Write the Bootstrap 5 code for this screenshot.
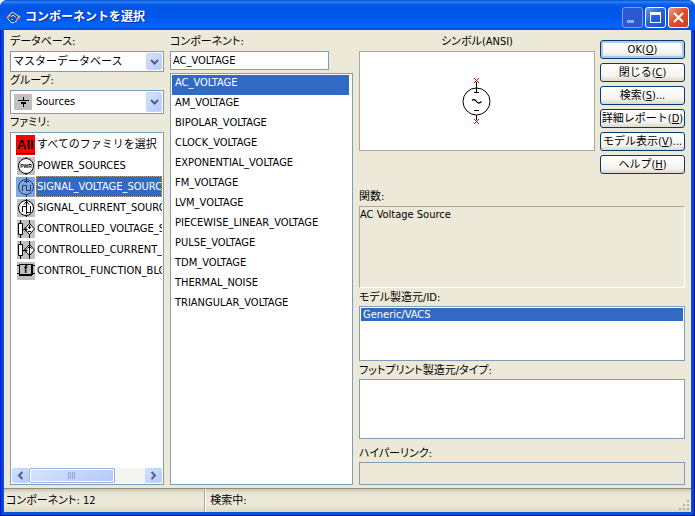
<!DOCTYPE html>
<html lang="ja">
<head>
<meta charset="utf-8">
<meta name="viewport" content="width=device-width, initial-scale=1">
<title>コンポーネントを選択</title>
<link href="https://cdn.jsdelivr.net/npm/bootstrap@5.3.0/dist/css/bootstrap.min.css" rel="stylesheet">
<style>
:root{--face:#ece9d8;--line:#7f9db9;--pick:#316ac5}
body{font-family:"DejaVu Sans Condensed","Noto Sans CJK JP",sans-serif;font-size:11px;line-height:16px;color:#000;background:#fff;font-feature-settings:"palt"}
.win{min-height:100vh;padding-bottom:3px;background:linear-gradient(90deg,#0019cf 0 1px,#0540e0 1px 3px,#0855dd 3px calc(100% - 3px),#0540e0 calc(100% - 3px) calc(100% - 1px),#00138c calc(100% - 1px));border-radius:7px 7px 0 0;border-bottom:1px solid #00138c}
.caption-bar{height:30px;padding:4px 6px 0 6px;border-radius:7px 7px 0 0;color:#fff;background:linear-gradient(#0453c8 0,#2a83ff 2px,#0b5fe8 4px,#0054e3 8px,#0058ee 18px,#0066ff 26px,#0050d8 30px)}
.caption-bar h1{font-size:12px;line-height:16px;font-weight:700;font-feature-settings:normal;text-shadow:1px 1px #0a2a8c}
.cap-btns{gap:2px}
.cap-btn{width:21px;height:21px;padding:0;display:flex;border:1px solid #fff;border-radius:3px;background:linear-gradient(135deg,#6f9af4,#2a5fe0 45%,#1a4fd0)}
.cap-btn:disabled{border-color:#7f9be6;background:#2a58d0}
.cap-btn.quit{background:linear-gradient(135deg,#f0a088,#e0502a 45%,#c8401a)}
.pane{background:var(--face);margin:0 4px;padding:3px 6px}
.cols{display:grid;grid-template-columns:154fr 183fr 326fr;column-gap:6px}
.cols>section{min-width:0}
.lab{display:block;line-height:16px;padding:1px 0;white-space:nowrap}
.lab.low{padding:2px 0 0}
.gap-top{margin-top:14px}
.gap-mid{margin-top:5px}
.well{background:#fff;border:1px solid var(--line);min-width:0;overflow:hidden}
.field{width:100%;font-size:inherit;line-height:16px;border:1px solid var(--line);border-radius:0;padding:0 2px;color:#000;background:#fff;resize:none;outline:0}
.entry{height:19px}
.link-entry{height:23px;background:var(--face)}
.combo{display:grid;grid-template-columns:minmax(0,1fr) 19px}
.combo select{grid-area:1/1/2/3;appearance:none;height:21px}
.combo.tall select{height:24px;padding-left:25px}
.combo .drop{grid-area:1/2;margin:2px 2px 2px 1px;pointer-events:none}
.combo .pic{grid-area:1/1;align-self:center;margin-left:4px;pointer-events:none}
.drop,.arrow,.thumb{display:flex;align-items:center;justify-content:center;border:1px solid #c3d3fd;border-radius:2px;background:linear-gradient(135deg,#d6e2fe,#b6caf7);padding:0}
.item{border:0;border-radius:0;background:none;color:#000;text-align:left;white-space:nowrap;display:flex;padding:0;font-size:inherit}
.fam{padding:1px 1px 0 0}
.fam .item{height:21px;padding-left:5px;align-items:center;gap:1px}
.fam .item svg{flex:none}
.fam .item span{flex:1 1 0;min-width:0;overflow:hidden;line-height:21px;padding-left:1px}
.fam .item.on span{background:var(--pick);color:#fff;outline:1px dotted #e0a030;outline-offset:-1px}
.comp{margin-top:3px;padding:1px 3px 1px 1px}
.comp .item{height:20px;line-height:15px;padding-left:3px}
.comp .item.on,.model .item.on{background:var(--pick);color:#fff}
.model{padding:1px}
.model .item{height:13px;line-height:13px;padding-left:2px}
.scroller{height:15px;margin:0 0 1px 1px;background:#f5f5f0}
.arrow{width:17px;height:15px}
.thumb{height:15px;flex:0 0 57%;border-color:#98b0e8;box-shadow:inset 0 0 0 1px #fff}
.push{height:19px;padding:0;font-size:11px;line-height:16px;white-space:nowrap;color:#000;border:1px solid #003c74;border-radius:3px;background:linear-gradient(#fff,#f5f4ee 70%,#dcd8cc)}
.push.main{box-shadow:inset 0 0 0 2px #b0c8f0}
.top-row{gap:5px}
.symbol{flex:236 1 0;min-width:0}
.pushes{flex:85 1 0;gap:4px;padding-top:7px}
.stage{height:100px;background:#fff;border:1px solid #aca899}
.note{background:var(--face);border-color:#aca899 #fff #fff #aca899;padding:0}
.f81{flex:82 0 82px}.f55{flex:55 0 55px}.f60{flex:60 0 60px}
.foot{height:24px;margin:0 4px;border-top:1px solid #8f8c7e;background:linear-gradient(#c8c5b4,#e8e5d6 4px,#ece9d8 16px,#dcd8c0);line-height:23px}
.foot .count{flex:0 0 29.3%;padding-left:2px;border-right:1px solid #aca899}
.foot .find{border-left:1px solid #fff;padding-left:4px}
</style>
</head>
<body>
<div class="win d-flex flex-column">
<header class="caption-bar d-flex align-items-center">
  <svg width="15" height="13" viewBox="0 0 15 13" fill="none" aria-hidden="true"><path d="M0 7l3-4 2 1-3 4zM10 8l3-4 2 2-4 4z" fill="#d0905a"/><path d="M3 5l3-4 5 3 2 2M2 8l4 4 5-2M5 6l2-2 4 3M5 8l3 1 3-3" stroke="#e4edf8"/><path d="M4 6l3-3 4 3-3 3zM5 9l4 2" stroke="#273d62"/></svg>
  <h1 class="m-0 ms-1 me-auto">コンポーネントを選択</h1>
  <div class="d-flex cap-btns">
    <button class="cap-btn" disabled aria-label="最小化"><svg width="19" height="19"><path d="M4 12h7v3H4z" fill="#8fa9ea"/></svg></button>
    <button class="cap-btn" aria-label="最大化"><svg width="19" height="19"><path d="M4 4h11v11H4zM5 7v7h9V7z" fill="#fff" fill-rule="evenodd"/></svg></button>
    <button class="cap-btn quit" aria-label="閉じる"><svg width="19" height="19"><path d="M5 5l9 9M14 5l-9 9" stroke="#fff" stroke-width="2.200"/></svg></button>
  </div>
</header>
<main class="pane cols flex-grow-1">
  <section class="d-flex flex-column">
    <label class="lab" for="db">データベース:</label>
    <div class="combo"><select id="db" class="field"><option>マスターデータベース</option></select>
      <span class="drop"><svg width="9" height="6" fill="none" stroke="#4d6185" stroke-width="2"><path d="M1 1l3.500 3.500L8 1"/></svg></span></div>
    <label class="lab" for="grp">グループ:</label>
    <div class="combo tall"><select id="grp" class="field"><option>Sources</option></select>
      <svg class="pic" width="18" height="16" fill="none" stroke="#000"><path d="M0 0h18v16H0z" fill="#c0c0c0" stroke="none"/><path d="M9.500 3v4M9.500 9v4"/><path d="M4 6.500h11"/><path d="M7 9h5" stroke-width="2"/></svg>
      <span class="drop"><svg width="9" height="6" fill="none" stroke="#4d6185" stroke-width="2"><path d="M1 1l3.500 3.500L8 1"/></svg></span></div>
    <div class="lab" id="famlab">ファミリ:</div>
    <div class="well fam flex-grow-1 d-flex flex-column" role="listbox" aria-labelledby="famlab">
      <button class="item" role="option"><svg width="19" height="20"><path d="M0 0h19v20H0z" fill="red"/><path d="M0 18.500h19" stroke="#000"/><text x="1" y="14" font-size="13" font-weight="700" font-family="Liberation Sans,sans-serif">All</text></svg><span>すべてのファミリを選択</span></button>
      <button class="item" role="option"><svg width="19" height="18"><path d="M1 0h18v18H1z" fill="#c0c0c0"/><circle cx="10" cy="9" r="7.500" fill="#fff" stroke="#000"/><path d="M10 0v2M10 16v2" stroke="#000"/><text x="10" y="11" font-size="5" font-weight="700" text-anchor="middle" font-family="Liberation Sans,sans-serif">PWR</text></svg><span>POWER_SOURCES</span></button>
      <button class="item on" role="option" aria-selected="true"><svg width="19" height="20" fill="none" stroke="#123a78"><path d="M0 0h19v20H0z" fill="#85a8dc" stroke="none"/><circle cx="10" cy="10" r="7.500"/><path d="M10.500 0v6M8 4.500h5M6.500 14V8.500h4V13.500h4V8M10.500 18v2"/></svg><span>SIGNAL_VOLTAGE_SOURCES</span></button>
      <button class="item" role="option"><svg width="19" height="18" fill="none" stroke="#000"><path d="M1 0h18v18H1z" fill="#c0c0c0" stroke="none"/><circle cx="10" cy="9" r="7.500" fill="#fff"/><path d="M10.500 0v15M8 5.500l2.500-3 2.500 3M6.500 13V7.500h4V13.500h4V7M10.500 16v2"/></svg><span>SIGNAL_CURRENT_SOURCES</span></button>
      <button class="item" role="option"><svg width="19" height="18" fill="none" stroke="#000"><path d="M1 0h18v18H1z" fill="#c0c0c0" stroke="none"/><path d="M2.500 3.500h4v11h-4zM4.500 0v3M4.500 15v3M13.500 0v3M13.500 15v3" fill="#fff"/><path d="M13.500 3.500L18.500 9l-5 5.500L8.500 9z" fill="#fff"/><path d="M7 9.500h4M13.500 5v4M12 7.500h3M12 11.500h3M9 7.500l2 2-2 2"/></svg><span>CONTROLLED_VOLTAGE_SOURCES</span></button>
      <button class="item" role="option"><svg width="19" height="18" fill="none" stroke="#000"><path d="M1 0h18v18H1z" fill="#c0c0c0" stroke="none"/><path d="M2.500 3.500h4v11h-4zM4.500 0v3M4.500 15v3M13.500 0v3M13.500 15v3" fill="#fff"/><path d="M13.500 3.500L18.500 9l-5 5.500L8.500 9z" fill="#fff"/><path d="M7 9.500h4M13.500 4v11M11.500 7.500l2-2 2 2M9 7.500l2 2-2 2"/></svg><span>CONTROLLED_CURRENT_SOURCES</span></button>
      <button class="item" role="option"><svg width="19" height="18" fill="none" stroke="#000"><path d="M1 0h18v18H1z" fill="#c0c0c0" stroke="none"/><path d="M3.500 2.500h12v10h-12zM1 3.500h2M1 11.500h2M16 3.500h3M16 11.500h3"/><path d="M3 13h13M16 2v11" stroke-width="2"/><text x="8" y="11" font-size="10" font-weight="700" fill="#000" stroke="none" font-family="Liberation Sans,sans-serif">f</text></svg><span>CONTROL_FUNCTION_BLOCKS</span></button>
      <div class="scroller d-flex mt-auto">
        <button class="arrow" aria-label="左へ"><svg width="7" height="9" fill="none" stroke="#4d6185" stroke-width="2"><path d="M5.500 1L2 4.500 5.500 8"/></svg></button>
        <div class="thumb"><svg width="8" height="7" stroke="#8ca5e0"><path d="M.5 0v7M2.500 0v7M4.500 0v7M6.500 0v7"/></svg></div>
        <button class="arrow ms-auto" aria-label="右へ"><svg width="7" height="9" fill="none" stroke="#4d6185" stroke-width="2"><path d="M1.500 1L5 4.500 1.500 8"/></svg></button>
      </div>
    </div>
  </section>
  <section class="d-flex flex-column">
    <label class="lab" for="cmp">コンポーネント:</label>
    <div class="pe-4"><input id="cmp" class="field entry d-block" value="AC_VOLTAGE"></div>
    <div class="well comp flex-grow-1 d-flex flex-column" role="listbox" aria-label="コンポーネント">
      <button class="item on" role="option" aria-selected="true">AC_VOLTAGE</button>
      <button class="item" role="option">AM_VOLTAGE</button>
      <button class="item" role="option">BIPOLAR_VOLTAGE</button>
      <button class="item" role="option">CLOCK_VOLTAGE</button>
      <button class="item" role="option">EXPONENTIAL_VOLTAGE</button>
      <button class="item" role="option">FM_VOLTAGE</button>
      <button class="item" role="option">LVM_VOLTAGE</button>
      <button class="item" role="option">PIECEWISE_LINEAR_VOLTAGE</button>
      <button class="item" role="option">PULSE_VOLTAGE</button>
      <button class="item" role="option">TDM_VOLTAGE</button>
      <button class="item" role="option">THERMAL_NOISE</button>
      <button class="item" role="option">TRIANGULAR_VOLTAGE</button>
    </div>
  </section>
  <section class="d-flex flex-column">
    <div class="d-flex top-row">
      <div class="symbol">
        <div class="lab text-center">シンボル(ANSI)</div>
        <div class="stage d-flex align-items-center justify-content-center">
          <svg width="42" height="50" fill="none" stroke="#000" role="img" aria-label="AC Voltage Source"><circle cx="20.500" cy="25.500" r="13.500"/><path d="M20.500 6v11M18 16.500h5M20.500 39v5M18 34.500h5"/><path d="M16 24.500q2.500-2 4.500 1t5 0" stroke-width="1.300"/><path d="M18 2l5 5M23 2l-5 5M18 43l5 5M23 43l-5 5" stroke="#f00"/></svg>
        </div>
      </div>
      <div class="pushes d-flex flex-column">
        <button class="push main">OK(<u>O</u>)</button>
        <button class="push">閉じる(<u>C</u>)</button>
        <button class="push">検索(<u>S</u>)...</button>
        <button class="push">詳細レポート(<u>D</u>)</button>
        <button class="push">モデル表示(<u>V</u>)...</button>
        <button class="push">ヘルプ(<u>H</u>)</button>
      </div>
    </div>
    <label class="lab gap-top" for="fn">関数:</label>
    <textarea id="fn" class="field note f81" readonly>AC Voltage Source</textarea>
    <div class="lab low">モデル製造元/ID:</div>
    <div class="well model f55 d-flex flex-column" role="listbox" aria-label="モデル製造元/ID"><button class="item on" role="option" aria-selected="true">Generic/VACS</button></div>
    <div class="lab low">フットプリント製造元/タイプ:</div>
    <div class="well f60" role="listbox" aria-label="フットプリント製造元/タイプ"></div>
    <label class="lab low gap-mid" for="link">ハイパーリンク:</label>
    <input id="link" class="field link-entry" readonly>
  </section>
</main>
<footer class="foot d-flex">
  <div class="count">コンポーネント: 12</div><div class="find flex-grow-1">検索中:</div>
  <svg class="align-self-end" width="13" height="13"><path d="M9 1h2v2H9zM5 5h2v2H5zM9 5h2v2H9zM1 9h2v2H1zM5 9h2v2H5zM9 9h2v2H9z" fill="#b8b4a2"/></svg>
</footer>
</div>
<script src="https://cdn.jsdelivr.net/npm/bootstrap@5.3.0/dist/js/bootstrap.bundle.min.js"></script>
</body></html>
